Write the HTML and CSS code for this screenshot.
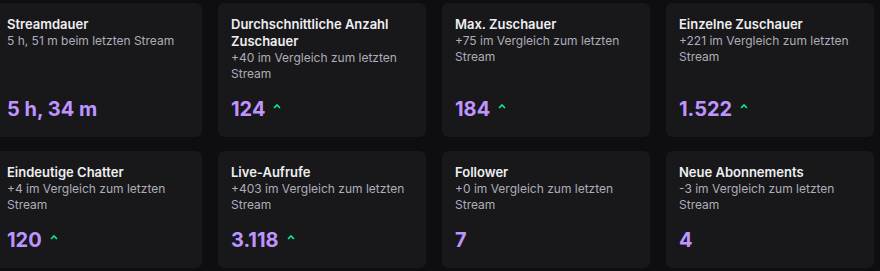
FILE: index.html
```html
<!DOCTYPE html>
<html lang="de">
<head>
    <meta charset="UTF-8">
    <meta name="viewport" content="width=device-width, initial-scale=1.0">
    <title>Stream-Statistiken</title>
    <link rel="stylesheet" href="styles.css">
</head>
<body>
    <div class="stats">
        <div class="card">
            <div class="title">Streamdauer</div>
            <div class="sub">5 h, 51 m beim letzten Stream</div>
            <div class="value">5 h, 34 m</div>
        </div>
        <div class="card">
            <div class="title">Durchschnittliche Anzahl Zuschauer</div>
            <div class="sub">+40 im Vergleich zum letzten Stream</div>
            <div class="value">124 <svg class="up" viewBox="0 0 8 5"><path d="M1 4 L4 1 L7 4"/></svg></div>
        </div>
        <div class="card">
            <div class="title">Max. Zuschauer</div>
            <div class="sub">+75 im Vergleich zum letzten Stream</div>
            <div class="value">184 <svg class="up" viewBox="0 0 8 5"><path d="M1 4 L4 1 L7 4"/></svg></div>
        </div>
        <div class="card">
            <div class="title">Einzelne Zuschauer</div>
            <div class="sub">+221 im Vergleich zum letzten Stream</div>
            <div class="value">1.522 <svg class="up" viewBox="0 0 8 5"><path d="M1 4 L4 1 L7 4"/></svg></div>
        </div>

        <div class="card">
            <div class="title">Eindeutige Chatter</div>
            <div class="sub">+4 im Vergleich zum letzten Stream</div>
            <div class="value">120 <svg class="up" viewBox="0 0 8 5"><path d="M1 4 L4 1 L7 4"/></svg></div>
        </div>
        <div class="card">
            <div class="title">Live-Aufrufe</div>
            <div class="sub">+403 im Vergleich zum letzten Stream</div>
            <div class="value">3.118 <svg class="up" viewBox="0 0 8 5"><path d="M1 4 L4 1 L7 4"/></svg></div>
        </div>
        <div class="card">
            <div class="title">Follower</div>
            <div class="sub">+0 im Vergleich zum letzten Stream</div>
            <div class="value">7</div>
        </div>
        <div class="card">
            <div class="title">Neue Abonnements</div>
            <div class="sub">-3 im Vergleich zum letzten Stream</div>
            <div class="value">4</div>
        </div>
    </div>
</body>
</html>
```

FILE: styles.css
```css
body {
    margin: 0;
    background-color: #0e0e10;
    font-family: Inter, "Noto Sans", sans-serif;
    color: #efeff1;
}

.stats {
    display: grid;
    grid-template-columns: repeat(4, 208px);
    column-gap: 16px;
    row-gap: 14px;
    margin: 3px 0 0 -6px;
}

.card {
    display: flex;
    flex-direction: column;
    background-color: #18181b;
    border-radius: 6px;
    padding: 13px 13px 14px;
}

.title {
    font-size: 13px;
    font-weight: 600;
    line-height: 17px;
}

.sub {
    font-size: 12px;
    line-height: 16px;
    color: #adadb8;
}

.value {
    margin-top: auto;
    padding-top: 13px;
    display: flex;
    align-items: center;
    gap: 8px;
    font-size: 20px;
    font-weight: 700;
    line-height: 28px;
    color: #bf94ff;
}

.up {
    width: 8px;
    height: 5px;
    margin-top: -6px;
    fill: none;
    stroke: #00f593;
    stroke-width: 1.6;
}
```
